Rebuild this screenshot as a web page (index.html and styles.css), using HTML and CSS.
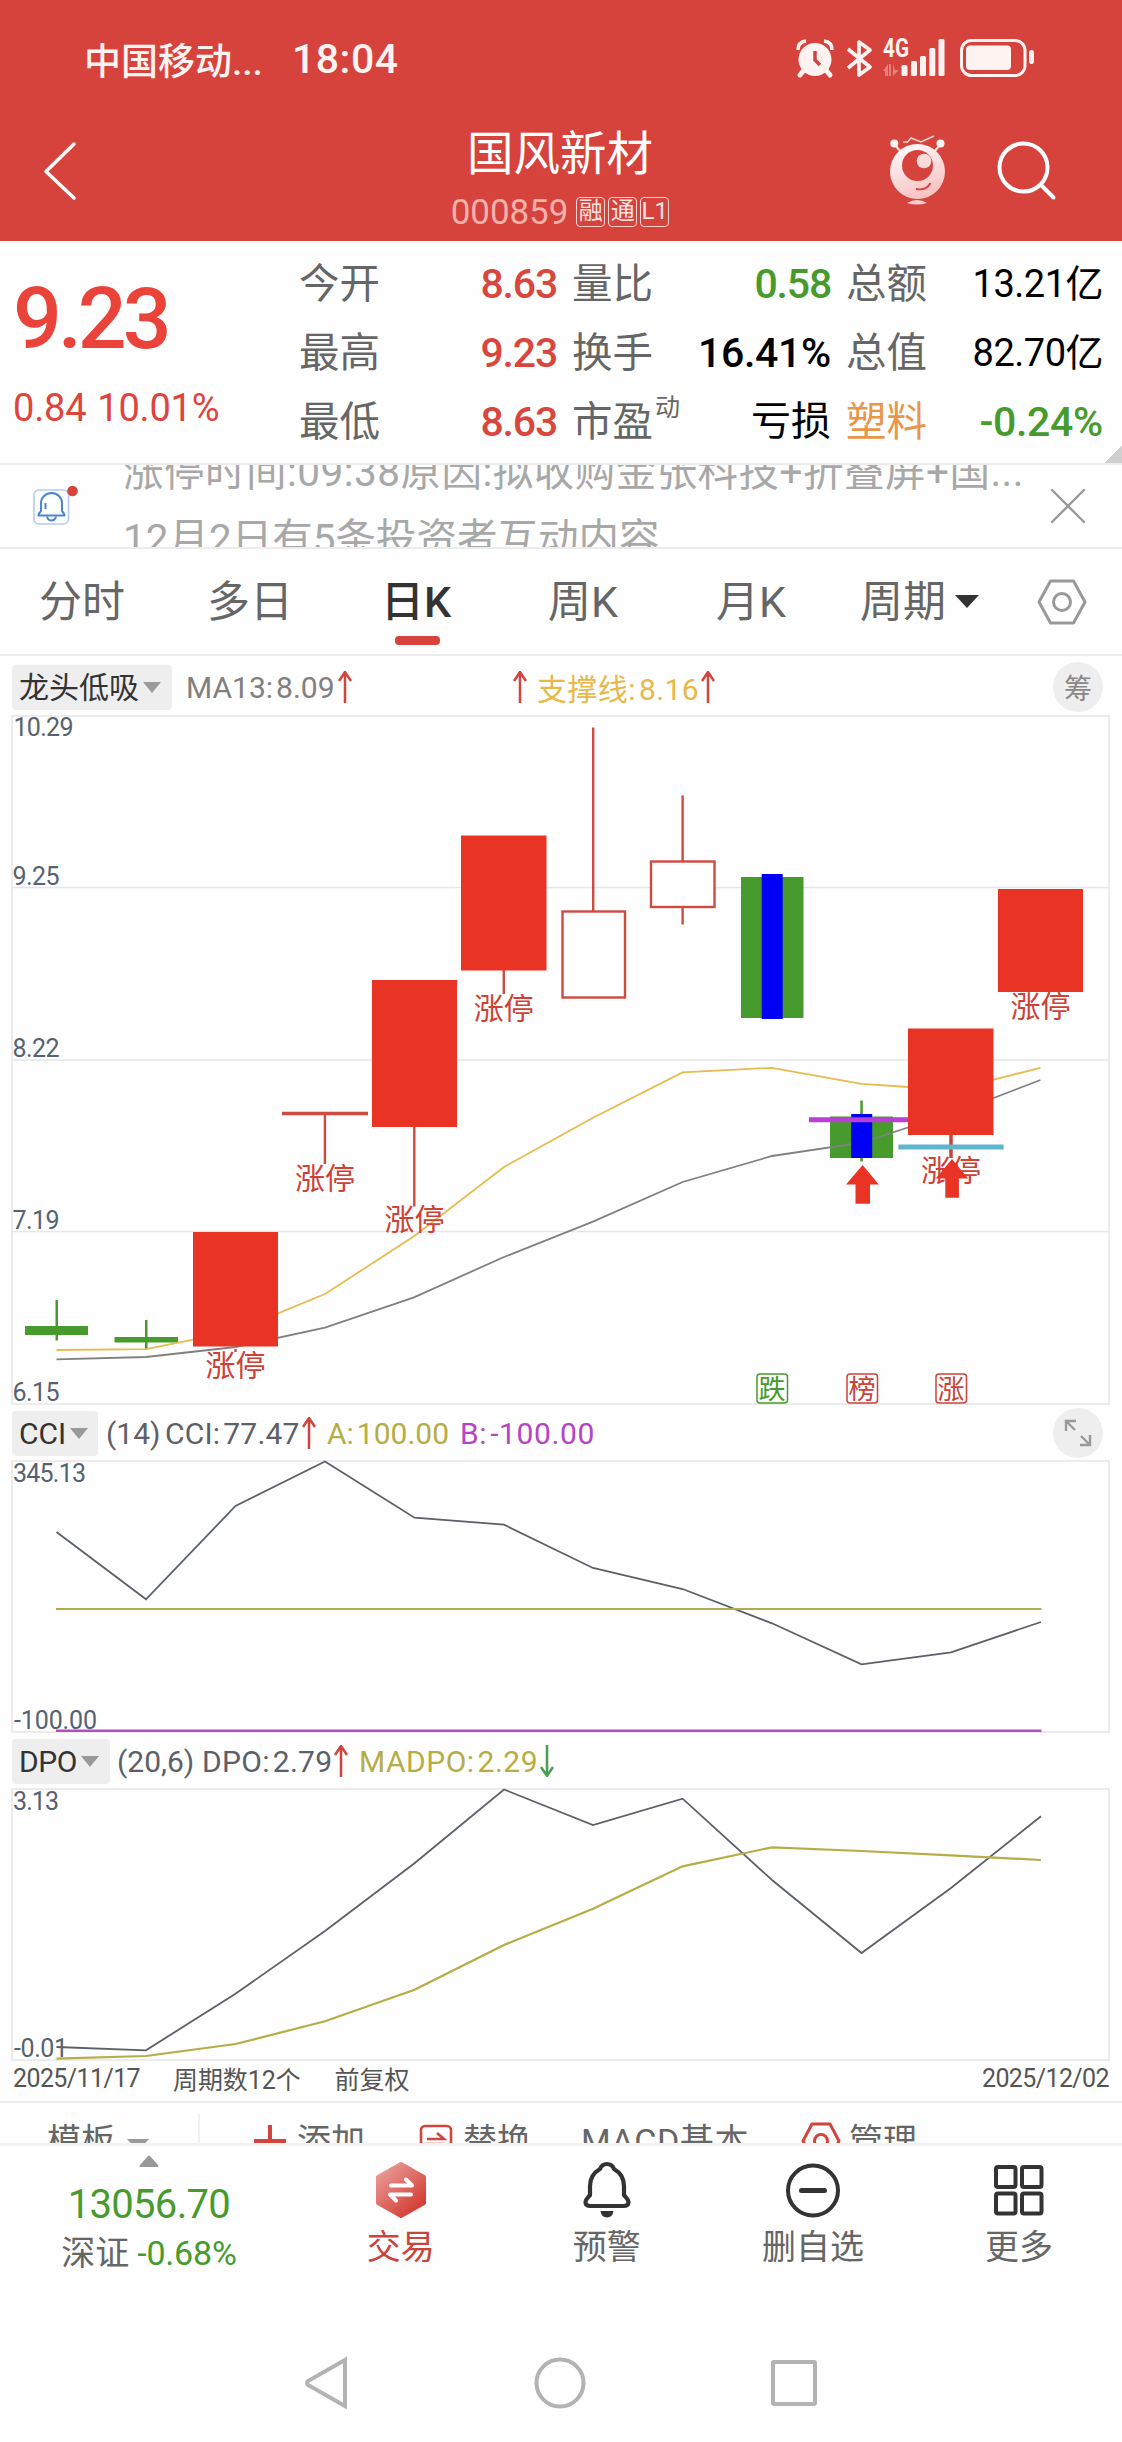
FILE: index.html
```html
<!DOCTYPE html>
<html lang="zh-CN">
<head>
    <meta charset="UTF-8">
    <meta name="viewport" content="width=device-width, initial-scale=1.0">
    <title>国风新材 000859</title>
    <link rel="stylesheet" href="styles.css">
</head>
<body>
    <header class="header">
        <div class="status">
            <span class="carrier">中国移动...</span>
            <span class="clock">18:04</span>
            <svg class="status-icons" width="242" height="50" viewBox="795 34 242 50" fill="#fff3f2">
                <!-- alarm -->
                <circle cx="815" cy="59.500" r="16.500"/>
                <path d="M798 50q0-8 8-9M832 50q0-8-8-9" fill="none" stroke="#fff3f2" stroke-width="3.500"/>
                <path d="M804 70l-4 5M826 70l4 5" stroke="#fff3f2" stroke-width="5" stroke-linecap="round"/>
                <path d="M815 51v9l5 5" fill="none" stroke="#d6433c" stroke-width="3.500"/>
                <!-- bluetooth -->
                <path d="M848 49l22 18-11 8V42l11 8-22 18" fill="none" stroke="#fff3f2" stroke-width="3.700" stroke-linejoin="round"/>
                <text class="net" x="883" y="57" textLength="26" lengthAdjust="spacingAndGlyphs">4G</text>
                <path d="M883 71l5-7v12h-3v-5zM899 70l-6 6V64l2 6zM889 64h2v12h-2z" opacity=".35"/>
                <rect x="901.500" y="65" width="6" height="11" rx="1.500"/>
                <rect x="911" y="61" width="6" height="15" rx="1.500"/>
                <rect x="920" y="56" width="6" height="20" rx="1.500"/>
                <rect x="929.300" y="48" width="6" height="28" rx="1.500"/>
                <rect x="938.500" y="39" width="6" height="37" rx="1.500"/>
                <!-- battery -->
                <rect x="961.500" y="40.500" width="63.500" height="35" rx="10" fill="none" stroke="#fff3f2" stroke-width="3"/>
                <rect x="966" y="45.500" width="45" height="24.500" rx="4"/>
                <rect x="1029" y="50" width="5" height="14" rx="2.500"/>
            </svg>
        </div>
        <div class="titlebar">
            <svg class="back" width="34" height="60" viewBox="0 0 34 60" fill="none" stroke="#fff" stroke-width="3.500" stroke-linecap="round" stroke-linejoin="round">
                <path d="M31 3L3 30.500 31 57"/>
            </svg>
            <div class="title">
                <h1>国风新材</h1>
                <div class="code">000859<i>融</i><i>通</i><i>L1</i></div>
            </div>
            <svg class="robot" width="58" height="72" viewBox="889 134 58 72">
                <defs>
                    <linearGradient id="face" x1="0" y1="0" x2=".4" y2="1">
                        <stop offset="0" stop-color="#fff"/>
                        <stop offset="1" stop-color="#f8c4c4"/>
                    </linearGradient>
                </defs>
                <path d="M895 145l6 7M940 145l-6 7" stroke="#fbe0df" stroke-width="2"/>
                <circle cx="894.300" cy="143.500" r="4" fill="#fff3f2"/>
                <circle cx="940.500" cy="143.500" r="4" fill="#fff3f2"/>
                <path d="M903 142h4.500l3.500-4 10 4 13-6" fill="none" stroke="#fbd5d3" stroke-width="1.500"/>
                <circle cx="917.500" cy="171.500" r="27.500" fill="url(#face)"/>
                <circle cx="917.500" cy="165.500" r="15.500" fill="#d6433c"/>
                <circle cx="924" cy="161" r="7.300" fill="#fbdcda"/>
                <path d="M916 189q10 2 14.500-6" fill="none" stroke="#d6433c" stroke-width="1.800"/>
                <path d="M907 203q10-6 20 0q-10 3-20 0z" fill="#f9cfcd"/>
            </svg>
            <svg class="search" width="62" height="62" viewBox="995 140 62 62" fill="none" stroke="#fff" stroke-width="4" stroke-linecap="round">
                <circle cx="1023.500" cy="167.500" r="24"/>
                <path d="M1041 185l12.500 12.500"/>
            </svg>
        </div>
    </header>

    <section class="quote">
        <div class="price">
            <div class="last">9.23</div>
            <div class="change"><span>0.84</span><span>10.01%</span></div>
        </div>
        <div class="stats">
            <div class="cell"><span>今开</span><b class="red">8.63</b></div>
            <div class="cell"><span>量比</span><b class="green">0.58</b></div>
            <div class="cell"><span>总额</span><b class="small">13.21亿</b></div>
            <div class="cell"><span>最高</span><b class="red">9.23</b></div>
            <div class="cell"><span>换手</span><b class="wide">16.41%</b></div>
            <div class="cell"><span>总值</span><b class="small">82.70亿</b></div>
            <div class="cell"><span>最低</span><b class="red">8.63</b></div>
            <div class="cell"><span>市盈<sup>动</sup></span><b class="cjk">亏损</b></div>
            <div class="cell"><span class="orange">塑料</span><b class="green wide">-0.24%</b></div>
        </div>
    </section>

    <section class="notice">
        <svg class="notice-icon" width="46" height="42" viewBox="33 484 46 42" fill="none">
            <rect x="34" y="489" width="34.500" height="34" rx="5" stroke="#b5cdee" stroke-width="1.600"/>
            <g stroke="#4a86cf" stroke-width="2">
                <path d="M41 510V502a10.500 10 0 0 1 21 0v8q2 2 2.500 4.500h-26q.5-2.500 2.500-4.500z" stroke-linejoin="round"/>
                <path d="M47 515.500q1 4 4.500 4t4.500-4M45.500 502v6"/>
            </g>
            <circle cx="72.500" cy="490" r="5.300" fill="#d6433c"/>
        </svg>
        <div class="notice-text">
            <p>涨停时间:09:38原因:拟收购金张科技+折叠屏+国...</p>
            <p>12月2日有5条投资者互动内容</p>
        </div>
        <svg class="close" width="36" height="36" viewBox="0 0 36 36" stroke="#999" stroke-width="2.400" stroke-linecap="round">
            <path d="M2 2l32 32M34 2L2 34"/>
        </svg>
    </section>

    <nav class="tabs">
        <a>分时</a>
        <a>多日</a>
        <a class="active">日K</a>
        <a>周K</a>
        <a>月K</a>
        <a class="period">周期<svg width="24" height="13" viewBox="0 0 24 13" fill="#333"><path d="M0 0h24L12 13z"/></svg></a>
        <svg class="gear" width="50" height="46" viewBox="0 0 50 46" fill="none" stroke="#999" stroke-width="3" stroke-linejoin="round">
            <path d="M13.500 2h23L48 23 36.500 44h-23L2 23z"/>
            <circle cx="25" cy="23" r="8.500"/>
        </svg>
    </nav>

    <div class="bar bar-main">
        <span class="chip">龙头低吸<em></em></span>
        <span class="ma">MA13:<u>8.09</u></span>
        <svg class="arrow" viewBox="0 0 14 32"><path d="M7 32V1M1 10l6-9 6 9"/></svg>
        <svg class="arrow second" viewBox="0 0 14 32"><path d="M7 32V1M1 10l6-9 6 9"/></svg>
        <span class="support">支撑线:<u>8.16</u></span>
        <svg class="arrow" viewBox="0 0 14 32"><path d="M7 32V1M1 10l6-9 6 9"/></svg>
        <span class="round">筹</span>
    </div>
    <svg class="chart" width="1122" height="690" viewBox="0 715 1122 690">
        <g class="grid">
            <rect x="12" y="716" width="1097" height="688"/>
            <path d="M12 887.500h1097M12 1060h1097M12 1231.500h1097"/>
        </g>
        <!-- candles -->
        <g fill="#479b2c">
            <rect x="25" y="1326" width="63" height="9"/>
            <rect x="55.500" y="1300" width="2.500" height="40.500"/>
            <rect x="114.500" y="1337" width="63.500" height="5.500"/>
            <rect x="145" y="1320" width="2.500" height="30"/>
            <rect x="741" y="877" width="62.500" height="141"/>
            <rect x="830" y="1116.500" width="63" height="41.500"/>
            <rect x="860.300" y="1100.500" width="2.500" height="61"/>
        </g>
        <g class="hollow">
            <path d="M593.200 727.500V911M682.600 795.500V861M682.600 907v17.500M324.900 1113v51M414.300 1126v80.500M503.800 970v24M235.500 1349v3"/>
            <rect x="562.500" y="911.500" width="62.500" height="86"/>
            <rect x="651" y="861.500" width="63.500" height="45.500"/>
            <path class="thick" d="M282 1113.500h86"/>
        </g>
        <polyline class="line gray" points="56.500,1359.300 146,1357 235.500,1347 325,1327.600 414,1297.300 504,1257 593,1221.600 682.600,1182 772,1156 861.500,1142.600 908,1127.500 951,1113 993.600,1098 1040.400,1080"/>
        <g fill="#0000f5">
            <rect x="761.700" y="874" width="21" height="145"/>
            <rect x="851.200" y="1114" width="21" height="44"/>
        </g>
        <polyline class="line yellow" points="56.500,1350 146,1349.200 193,1339.600 278,1313.400 325,1294 414,1236.300 504,1167 593,1117.800 682.600,1072.400 772,1067.800 861.500,1083.800 908,1087 951,1090 993.600,1079.700 1040.400,1067.800"/>
        <path d="M809 1119.800h101" stroke="#b93fd6" stroke-width="5"/>
        <g fill="#e93324">
            <rect x="193" y="1232" width="85" height="114.500"/>
            <rect x="372" y="980" width="85" height="147"/>
            <rect x="461" y="835.500" width="85.500" height="135"/>
            <rect x="908" y="1028.500" width="85.500" height="106.500"/>
            <rect x="998" y="889" width="85" height="103"/>
        </g>
        <path d="M951 1134v24" stroke="#c9443a" stroke-width="3.500"/>
        <path d="M898.400 1147h105.200" stroke="#5fb6cf" stroke-width="5"/>
        <g class="limit">
            <text x="235.500" y="1375.500">涨停</text>
            <text x="325" y="1188.500">涨停</text>
            <text x="414.500" y="1230">涨停</text>
            <text x="503.800" y="1018.500">涨停</text>
            <text x="951" y="1180.500">涨停</text>
            <text x="1040.400" y="1016.500">涨停</text>
        </g>
        <g fill="#e93324">
            <path d="M862.600 1165l16.200 19.400H870v19.300h-14.500v-19.300H846z"/>
            <path d="M952 1159l16.200 19.400h-9.300v19.300h-13.600v-19.300h-9.600z"/>
        </g>
        <g class="tag">
            <rect x="757" y="1374" width="30.500" height="29" rx="3" stroke="#479b2c"/>
            <rect x="847" y="1374" width="30.500" height="29" rx="3" stroke="#c9443a"/>
            <rect x="936" y="1374" width="30.500" height="29" rx="3" stroke="#c9443a"/>
            <text x="772" y="1399" fill="#479b2c">跌</text>
            <text x="862" y="1399" fill="#c9443a">榜</text>
            <text x="951" y="1399" fill="#c9443a">涨</text>
        </g>
        <g class="axis">
            <text x="13.500" y="735.500" textLength="60">10.29</text>
            <text x="12.500" y="885" textLength="47">9.25</text>
            <text x="12.500" y="1057" textLength="47">8.22</text>
            <text x="12.500" y="1229" textLength="47">7.19</text>
            <text x="12.500" y="1401" textLength="47">6.15</text>
        </g>
    </svg>

    <div class="bar bar-cci">
        <span class="chip">CCI<em></em></span>
        <span class="params">(14)</span>
        <span class="dark">CCI:<u>77.47</u></span>
        <svg class="arrow" viewBox="0 0 14 32"><path d="M7 32V1M1 10l6-9 6 9"/></svg>
        <span class="olive">A:<u>100.00</u></span>
        <span class="purple">B:<u>-100.00</u></span>
        <span class="round"><svg width="30" height="30" viewBox="0 0 30 30" fill="none" stroke="#999" stroke-width="2.400"><path d="M3 13V3h10M3 3l9 9M27 17v10H17M27 27l-9-9"/></svg></span>
    </div>
    <svg class="chart" width="1122" height="273" viewBox="0 1460 1122 273">
        <rect class="frame" x="12" y="1461" width="1097" height="271"/>
        <g class="axis">
            <text x="13" y="1482" textLength="73">345.13</text>
            <text x="14" y="1729" textLength="83">-100.00</text>
        </g>
        <polyline class="line dark-line" points="56.500,1532 146,1599.300 235.500,1506 325,1461.500 414.500,1517.700 504,1524.700 593,1568 682.600,1589 772,1623.300 861.500,1664.300 951,1652.300 1041,1622"/>
        <path d="M56 1609h985.500" stroke="#b3ab50" stroke-width="2"/>
        <path d="M56 1730.700h985.500" stroke="#b34fc1" stroke-width="2.500"/>
    </svg>

    <div class="bar bar-dpo">
        <span class="chip">DPO<em></em></span>
        <span class="params">(20,6)</span>
        <span class="dark">DPO:<u>2.79</u></span>
        <svg class="arrow" viewBox="0 0 14 32"><path d="M7 32V1M1 10l6-9 6 9"/></svg>
        <span class="olive">MADPO:<u>2.29</u></span>
        <svg class="arrow down" viewBox="0 0 14 32"><path d="M7 0v31M1 22l6 9 6-9"/></svg>
    </div>
    <svg class="chart" width="1122" height="273" viewBox="0 1788 1122 273">
        <rect class="frame" x="12" y="1789" width="1097" height="271"/>
        <g class="axis">
            <text x="13" y="1810" textLength="46">3.13</text>
            <text x="14" y="2057" textLength="54">-0.01</text>
        </g>
        <polyline class="line dark-line" points="56.500,2047 146,2050.300 235.500,1993.700 325,1931 414.500,1863.300 504,1789.500 593,1825 682.600,1798.700 772,1880 861.500,1953 951,1888 1041,1816.300"/>
        <polyline class="line olive-line" points="56.500,2058.700 146,2056 235.500,2044 325,2021.300 414.500,1989.700 504,1945 593,1908.700 682.600,1866.300 772,1847.300 861.500,1851 951,1855.300 1041,1860"/>
    </svg>

    <div class="range">
        <span class="date">2025/11/17</span>
        <span class="count">周期数12个</span>
        <span>前复权</span>
        <span class="date end">2025/12/02</span>
    </div>

    <div class="tools">
        <span class="tpl">模板<em></em></span>
        <span class="add"><svg width="34" height="34" viewBox="0 0 34 34" fill="none" stroke="#d0453d" stroke-width="4"><path d="M17 1v32M1 17h32"/></svg>添加</span>
        <span class="swap"><svg width="34" height="34" viewBox="0 0 34 34" fill="none" stroke="#d0453d" stroke-width="2.600"><rect x="2" y="2" width="30" height="30" rx="4"/><path d="M8 15h17l-7-6M26 20H9l7 6"/></svg>替换</span>
        <span class="macd">MACD基本</span>
        <span class="manage"><svg width="40" height="38" viewBox="0 0 40 38" fill="none" stroke="#d0453d" stroke-width="3" stroke-linejoin="round"><path d="M11 2h18l9 17-9 17H11L2 19z"/><circle cx="20" cy="19" r="6.500"/></svg>管理</span>
    </div>

    <div class="bottom">
        <div class="index">
            <svg width="20" height="12" viewBox="0 0 20 12" fill="#999" stroke="#999" stroke-width="2" stroke-linejoin="round"><path d="M10 1.500L18.500 11h-17z"/></svg>
            <strong>13056.70</strong>
            <p>深证<b>-0.68%</b></p>
        </div>
        <div class="action trade">
            <svg width="56" height="62" viewBox="373 2158 56 62">
                <defs>
                    <linearGradient id="hex" x1="0" y1="0" x2=".8" y2="1">
                        <stop offset="0" stop-color="#eba5a1"/>
                        <stop offset="1" stop-color="#d2382f"/>
                    </linearGradient>
                </defs>
                <path d="M401 2163l23 13v26l-23 13-23-13v-26z" fill="url(#hex)" stroke="url(#hex)" stroke-width="4" stroke-linejoin="round"/>
                <path d="M391 2184.500h21l-6-6M411 2193.500h-21l6 6" fill="none" stroke="#fff" stroke-width="4" stroke-linecap="round" stroke-linejoin="round"/>
            </svg>
            交易
        </div>
        <div class="action">
            <svg width="56" height="62" viewBox="579 2158 56 62" fill="none" stroke="#333" stroke-width="4.200" stroke-linejoin="round">
                <path d="M607 2163q-5 0-7 5c-7 4-10 10-10 17v9c-2 3-4.500 4-4.500 7 0 3 2 4 5 4h33c3 0 5-1 5-4 0-3-2.500-4-4.500-7v-9c0-7-3-13-10-17q-2-5-7-5z"/>
                <path d="M600.500 2210h13q-1 6.500-6.500 6.500t-6.500-6.500z" fill="#333" stroke="none"/>
            </svg>
            预警
        </div>
        <div class="action">
            <svg width="56" height="62" viewBox="785.500 2158 56 62" fill="none" stroke="#333" stroke-width="4">
                <circle cx="813.500" cy="2189.500" r="25"/>
                <path d="M802 2189.500h23" stroke-width="5" stroke-linecap="round"/>
            </svg>
            删自选
        </div>
        <div class="action">
            <svg width="56" height="62" viewBox="991.500 2158 56 62" fill="none" stroke="#333" stroke-width="4">
                <rect x="996.500" y="2166" width="19.500" height="20" rx="2"/>
                <rect x="1022.500" y="2166" width="19.500" height="20" rx="2"/>
                <rect x="996.500" y="2192.500" width="19.500" height="20" rx="2"/>
                <rect x="1022.500" y="2192.500" width="19.500" height="20" rx="2"/>
            </svg>
            更多
        </div>
    </div>

    <div class="sysnav">
        <svg width="46" height="54" viewBox="0 0 46 54"><path d="M41 4v46L4 29q-2-2 0-4z"/></svg>
        <svg width="54" height="54" viewBox="0 0 54 54"><circle cx="27" cy="27" r="23.500"/></svg>
        <svg width="48" height="50" viewBox="0 0 48 50"><rect x="3" y="4" width="42" height="42" rx="1"/></svg>
    </div>
</body>
</html>
```

FILE: styles.css
```css
* {
    box-sizing: border-box;
}

body {
    margin: 0;
    width: 1122px;
    height: 2442px;
    overflow: hidden;
    background: #fefefe;
    color: #666;
    font-family: Roboto, "Noto Sans CJK SC", sans-serif;
}

svg {
    display: block;
    flex: none;
}

h1, p {
    margin: 0;
    font-weight: normal;
}

b, strong, i, em, u {
    font-weight: normal;
    font-style: normal;
    text-decoration: none;
}

span, a, b {
    white-space: nowrap;
}

/* header */
.header {
    height: 241px;
    background: #d6433c;
    color: #fff;
}

.status {
    display: flex;
    align-items: center;
    height: 118px;
    padding: 0 85px 0 84px;
    color: #fff3f2;
}

.carrier {
    width: 208px;
    font-size: 37px;
    font-weight: 500;
}

.clock {
    font-size: 41px;
    font-weight: 500;
    letter-spacing: 0.5px;
}

.status-icons {
    margin-left: auto;
}

.net {
    font-size: 25px;
    font-weight: 700;
}

.titlebar {
    display: flex;
    height: 123px;
    padding: 0 65px 0 43px;
}

.back {
    margin-top: 23px;
}

.title {
    flex: 1;
    padding-left: 154px;
    text-align: center;
}

.title h1 {
    height: 70px;
    padding-top: 1px;
    font-size: 46.5px;
    line-height: 70px;
}

.code {
    display: flex;
    justify-content: center;
    align-items: center;
    gap: 3px;
    height: 48px;
    font-size: 35px;
    letter-spacing: -0.1px;
    color: #f3b1ac;
}

.code i {
    width: 29px;
    height: 30px;
    border: 1.5px solid #f9d3d0;
    border-radius: 4px;
    font-size: 24px;
    line-height: 27px;
    color: #fbe3e1;
}

.code i:first-of-type {
    margin-left: 5px;
}

.robot {
    margin-top: 16px;
    margin-right: 48px;
}

.search {
    margin-top: 22px;
}

/* quote */
.quote {
    display: flex;
    height: 224px;
    border-bottom: 2px solid #ececec;
    background: linear-gradient(135deg, transparent 50%, #d0d0d0 50%) right bottom / 18px 18px no-repeat;
}

.price {
    width: 299px;
    padding: 28px 0 0 13px;
    color: #dd453c;
}

.last {
    height: 100px;
    font-size: 86px;
    font-weight: 500;
    line-height: 100px;
    letter-spacing: -4px;
    color: #e9433a;
}

.change {
    display: flex;
    gap: 11px;
    margin-top: 17px;
    font-size: 38px;
    line-height: 44px;
    letter-spacing: -0.2px;
}

.stats {
    display: grid;
    grid-template-columns: 258px 259px 257px;
    grid-auto-rows: 68.700px;
    column-gap: 15px;
    padding-top: 9px;
}

.cell {
    display: flex;
    justify-content: space-between;
    align-items: center;
    font-size: 40.500px;
    line-height: 60px;
}

.cell b {
    font-size: 41px;
    font-weight: 500;
    letter-spacing: -1.2px;
    color: #000;
}

.cell .wide {
    letter-spacing: -0.3px;
}

.cell .small {
    font-size: 38px;
    font-weight: 400;
    letter-spacing: -0.5px;
}

.cell .cjk {
    font-size: 40px;
    font-weight: 400;
    letter-spacing: 0;
}

.cell sup {
    font-size: 25px;
    line-height: 0;
    vertical-align: 20px;
    margin-left: 2px;
}

.cell .red {
    color: #d8463d;
}

.cell .green {
    color: #479b2c;
}

.orange {
    color: #e8964a;
}

/* notice */
.notice {
    display: flex;
    align-items: center;
    height: 84px;
    padding: 0 36px 0 33px;
    border-bottom: 2px solid #ececec;
    overflow: hidden;
}

.notice-text {
    flex: 1;
    height: 82px;
    padding-left: 44px;
    overflow: hidden;
    font-size: 40.500px;
    color: #a8a8a8;
}

.notice-text p {
    height: 67px;
    line-height: 67px;
    white-space: nowrap;
}

.notice-text p:first-child {
    margin-top: -26px;
    letter-spacing: 0.480px;
}

/* tabs */
.tabs {
    display: flex;
    align-items: center;
    height: 107px;
    padding: 0 35px 0 39px;
    border-bottom: 2px solid #ececec;
    font-size: 43px;
}

.tabs a {
    width: 168px;
    line-height: 60px;
}

.tabs .active {
    position: relative;
    width: 167px;
    margin-left: 6px;
    color: #333;
    font-weight: 500;
}

.tabs .active::after {
    content: "";
    position: absolute;
    left: 14px;
    top: 64px;
    width: 45px;
    height: 9px;
    border-radius: 4px;
    background: #d6433c;
}

.tabs .period {
    display: flex;
    align-items: center;
    gap: 9px;
    width: auto;
    margin-left: -24px;
}

.gear {
    margin-left: auto;
}

/* indicator bars */
.bar {
    display: flex;
    align-items: center;
    height: 55px;
    padding: 1px 19px 0 12px;
    font-size: 30px;
    color: #5c6068;
}

.bar-main {
    height: 59px;
    padding-top: 3px;
}

.bar u {
    margin-left: 3px;
}

.chip {
    display: flex;
    align-items: center;
    height: 45px;
    padding-left: 7px;
    border-radius: 4px;
    background: #eee;
    color: #333;
    line-height: 45px;
}

.bar-main .chip {
    width: 160px;
    margin-right: 14px;
}

.bar-cci .chip {
    width: 86px;
    margin-right: 8px;
}

.bar-dpo .chip {
    width: 98px;
    margin-right: 7px;
    letter-spacing: -0.4px;
}

.chip em {
    margin-left: 4px;
    border: 9px solid transparent;
    border-top: 11px solid #999;
    border-bottom: 0;
}

.arrow {
    width: 14px;
    height: 32px;
    margin-left: 3px;
    fill: none;
    stroke: #d0453d;
    stroke-width: 2.500;
}

.arrow.down {
    stroke: #4a9d55;
}

.arrow.second {
    margin-left: 161px;
}

.ma {
    width: 149px;
    color: #808080;
}

.support {
    width: 161px;
    margin-left: 10px;
    color: #e6b94a;
    font-size: 30px;
    letter-spacing: 0.4px;
}

.round {
    display: flex;
    justify-content: center;
    align-items: center;
    width: 50px;
    height: 50px;
    margin-left: auto;
    border-radius: 50%;
    background: #eee;
    color: #888;
    font-size: 28px;
}

.params {
    margin-right: 9px;
}

.bar-cci .params {
    width: 50px;
}

.bar-cci .dark {
    width: 134px;
    letter-spacing: 0.200px;
}

.olive {
    margin-left: 11px;
    color: #b5ad45;
}

.bar-cci .olive {
    width: 122px;
}

.purple {
    margin-left: 11px;
    color: #b445c4;
    letter-spacing: 0.600px;
}

.bar-dpo .params {
    width: 76px;
}

.bar-dpo .dark {
    width: 129px;
    letter-spacing: 0.300px;
}

.bar-dpo .olive {
    width: 178px;
    letter-spacing: 0.500px;
}

/* charts */
.grid, .frame {
    fill: none;
    stroke: #e6e6e6;
    stroke-width: 1.500;
}

.hollow {
    fill: #fefefe;
    stroke: #cf4a41;
    stroke-width: 2.400;
}

.hollow .thick {
    stroke-width: 3.500;
}

.line {
    fill: none;
    stroke-width: 1.800;
}

.gray {
    stroke: #808080;
}

.yellow {
    stroke: #e6bb50;
}

.dark-line {
    stroke: #5c6068;
}

.olive-line {
    stroke: #b5ad45;
    stroke-width: 2.200;
}

.limit {
    fill: #cf4035;
    font-size: 30px;
    text-anchor: middle;
}

.tag {
    fill: none;
    stroke-width: 1.500;
    font-size: 27px;
    text-anchor: middle;
}

.tag text {
    stroke: none;
}

.axis {
    fill: #566270;
    font-size: 25px;
}

/* date range */
.range {
    display: flex;
    align-items: center;
    height: 42px;
    padding: 0 13px 6px 13px;
    border-bottom: 2px solid #ececec;
    font-size: 25px;
    color: #555;
}

.range .date {
    letter-spacing: -0.600px;
}

.range .count {
    margin: 0 34px 0 33px;
    letter-spacing: -0.100px;
}

.range .end {
    margin-left: auto;
}

/* template tools, cut by the bottom bar */
.tools {
    display: flex;
    height: 43px;
    border-bottom: 3px solid #f2f2f2;
    overflow: hidden;
    padding-left: 47px;
    font-size: 34px;
}

.tools span {
    display: flex;
    align-items: center;
    height: 48px;
    margin-top: 14px;
    line-height: 48px;
}

.tools .tpl {
    width: 153px;
    height: 54px;
    border-right: 2px solid #f0f0f0;
}

.tpl em {
    margin: 7px 0 0 12px;
    border: 11px solid transparent;
    border-top: 12px solid #999;
    border-bottom: 0;
}

.tools .tpl {
    margin-top: 11px;
}

.tools svg {
    margin-right: 10px;
}

.add {
    width: 166px;
    margin-left: 53px;
}

.swap {
    width: 162px;
}

.macd {
    width: 220px;
    letter-spacing: 0.600px;
}

.manage svg {
    margin-right: 8px;
}

/* bottom bar */
.bottom {
    display: flex;
    height: 175px;
}

.index {
    display: flex;
    flex-direction: column;
    align-items: center;
    width: 298px;
    padding-top: 9px;
    color: #479b2c;
}

.index strong {
    margin-top: 14px;
    font-size: 40px;
    line-height: 48px;
    letter-spacing: -0.700px;
}

.index p {
    display: flex;
    gap: 8px;
    margin-top: -1px;
    font-size: 34px;
    line-height: 50px;
    color: #666;
}

.index b {
    color: #479b2c;
    font-size: 34px;
    letter-spacing: -0.200px;
}

.action {
    display: flex;
    flex-direction: column;
    align-items: center;
    width: 206.200px;
    padding-top: 13px;
    font-size: 34px;
    line-height: 53px;
}

.trade {
    color: #c9443a;
}

/* system navigation */
.sysnav {
    display: flex;
    justify-content: center;
    align-items: center;
    gap: 183px;
    height: 124px;
    fill: none;
    stroke: #b3b3b3;
    stroke-width: 4;
}
```
